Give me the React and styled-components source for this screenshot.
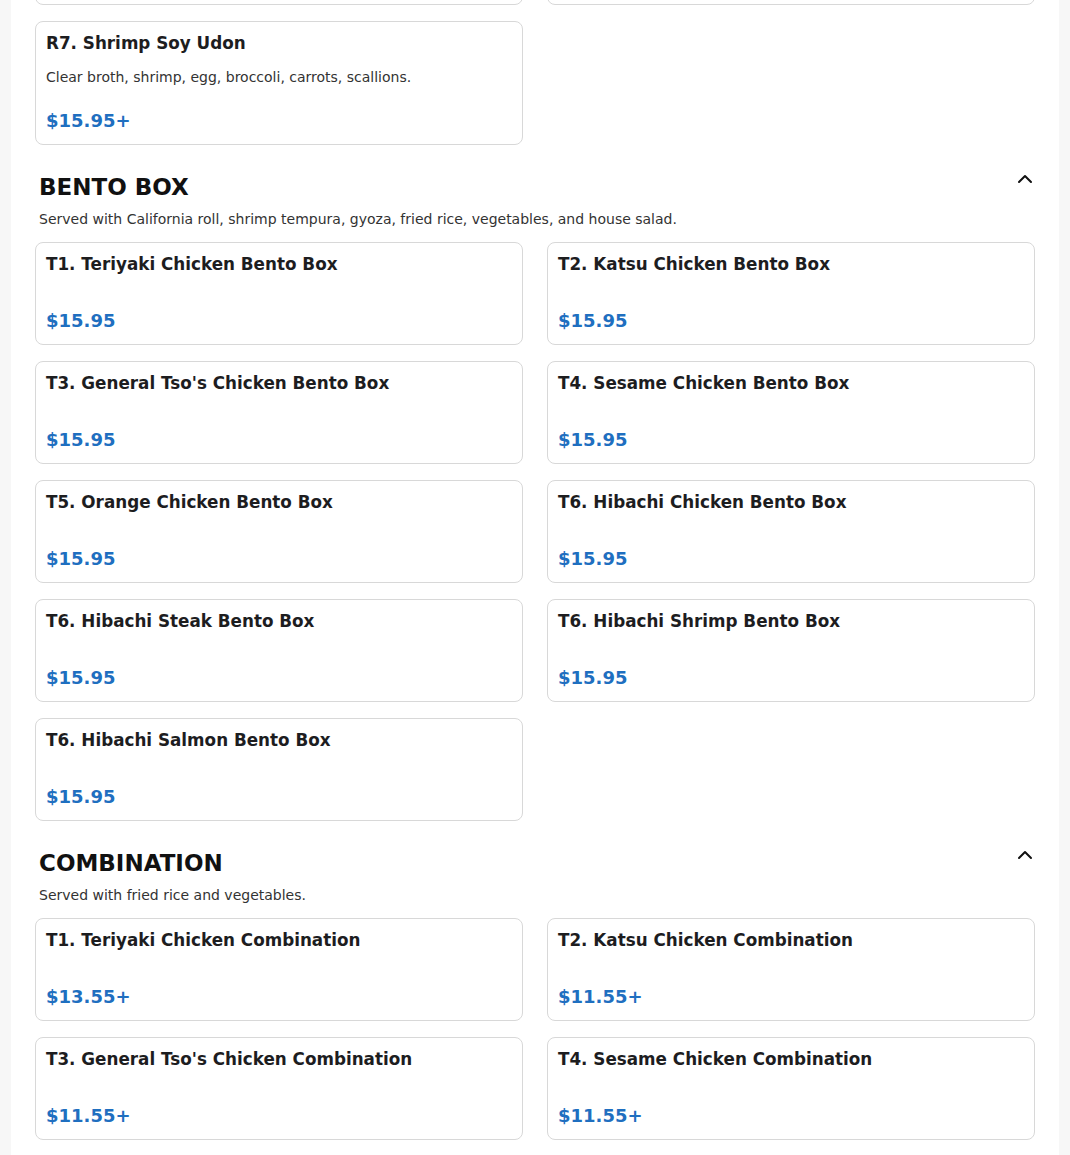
import React, { useState } from "react";
import styled, { createGlobalStyle } from "styled-components";
import { ChevronUp } from "lucide-react";

const menu = [
  {
    id: "noodles",
    title: "NOODLE SOUP",
    description: "",
    hidden: true,
    items: [
      { name: "R5. Seafood Udon", desc: "Clear broth, shrimp, scallop, crab stick, vegetables.", price: "$16.95+" },
      { name: "R6. Chicken Soy Udon", desc: "Clear broth, chicken, egg, broccoli, carrots, scallions.", price: "$14.95+" },
      { name: "R7. Shrimp Soy Udon", desc: "Clear broth, shrimp, egg, broccoli, carrots, scallions.", price: "$15.95+" },
    ],
  },
  {
    id: "bento",
    title: "BENTO BOX",
    description:
      "Served with California roll, shrimp tempura, gyoza, fried rice, vegetables, and house salad.",
    items: [
      { name: "T1. Teriyaki Chicken Bento Box", price: "$15.95" },
      { name: "T2. Katsu Chicken Bento Box", price: "$15.95" },
      { name: "T3. General Tso's Chicken Bento Box", price: "$15.95" },
      { name: "T4. Sesame Chicken Bento Box", price: "$15.95" },
      { name: "T5. Orange Chicken Bento Box", price: "$15.95" },
      { name: "T6. Hibachi Chicken Bento Box", price: "$15.95" },
      { name: "T6. Hibachi Steak Bento Box", price: "$15.95" },
      { name: "T6. Hibachi Shrimp Bento Box", price: "$15.95" },
      { name: "T6. Hibachi Salmon Bento Box", price: "$15.95" },
    ],
  },
  {
    id: "combo",
    title: "COMBINATION",
    description: "Served with fried rice and vegetables.",
    items: [
      { name: "T1. Teriyaki Chicken Combination", price: "$13.55+" },
      { name: "T2. Katsu Chicken Combination", price: "$11.55+" },
      { name: "T3. General Tso's Chicken Combination", price: "$11.55+" },
      { name: "T4. Sesame Chicken Combination", price: "$11.55+" },
      { name: "T5. Orange Chicken Combination", price: "$11.55+" },
      { name: "T6. Hibachi Chicken Combination", price: "$12.55+" },
    ],
  },
];

const Section = ({ section }) => {
  const [open, setOpen] = useState(true);

  return (
    <SectionWrap $scrolled={section.hidden}>
      {!section.hidden && (
        <>
          <SectionHeader>
            <SectionTitle>{section.title}</SectionTitle>
            <ToggleButton onClick={() => setOpen(!open)} aria-label="Toggle section">
              <ChevronUp size={24} strokeWidth={2} />
            </ToggleButton>
          </SectionHeader>
          {section.description && <SectionDesc>{section.description}</SectionDesc>}
        </>
      )}
      {open && (
        <ItemGrid>
          {section.items.map((item, index) => (
            <ItemCard key={index}>
              <ItemName>{item.name}</ItemName>
              {item.desc && <ItemDesc>{item.desc}</ItemDesc>}
              <ItemPrice>{item.price}</ItemPrice>
            </ItemCard>
          ))}
        </ItemGrid>
      )}
    </SectionWrap>
  );
};

const App = () => {
  return (
    <>
      <GlobalStyle />
      <Viewport>
        <Panel>
          {menu.map((section) => (
            <Section key={section.id} section={section} />
          ))}
        </Panel>
      </Viewport>
    </>
  );
};

const GlobalStyle = createGlobalStyle`
  html, body {
    margin: 0;
    padding: 0;
    background: #f7f7f7;
    font-family: "DejaVu Sans", Verdana, sans-serif;
  }
`;

// page is shown scrolled down into the menu
const Viewport = styled.div`
  height: 1155px;
  overflow: hidden;
  padding: 0 11px;
`;

const Panel = styled.main`
  background: #ffffff;
  padding: 0 24px 40px;
  margin-top: -119px;
`;

const SectionWrap = styled.section`
  margin-top: ${(p) => (p.$scrolled ? "0" : "22px")};
`;

const SectionHeader = styled.div`
  display: flex;
  justify-content: space-between;
  align-items: flex-start;
  margin: 0 -2px 0 4px;
`;

const SectionTitle = styled.h2`
  margin: 6px 0 0;
  font-size: 23px;
  line-height: 28px;
  font-weight: 700;
  color: #111111;
`;

const ToggleButton = styled.button`
  display: flex;
  align-items: center;
  justify-content: center;
  width: 24px;
  height: 24px;
  padding: 0;
  border: none;
  background: transparent;
  color: #111111;
  cursor: pointer;
`;

const SectionDesc = styled.p`
  margin: 8px 0 13px 4px;
  font-size: 14px;
  line-height: 20px;
  color: #333333;
`;

const ItemGrid = styled.div`
  display: grid;
  grid-template-columns: 1fr 1fr;
  column-gap: 24px;
  row-gap: 16px;
`;

const ItemCard = styled.div`
  box-sizing: border-box;
  min-height: 103px;
  display: flex;
  flex-direction: column;
  padding: 10px 10px 12px;
  border: 1px solid #d8d8d8;
  border-radius: 8px;
  background: #ffffff;
`;

const ItemName = styled.h3`
  margin: 0;
  font-size: 16.8px;
  line-height: 22px;
  font-weight: 700;
  color: #1d1d1f;
`;

const ItemDesc = styled.p`
  margin: 13px 0 0;
  font-size: 14px;
  line-height: 20px;
  color: #333333;
`;

const ItemPrice = styled.div`
  margin-top: auto;
  padding-top: 23px;
  font-size: 18px;
  line-height: 22px;
  font-weight: 700;
  color: #1f6fc0;
`;

export default App;
